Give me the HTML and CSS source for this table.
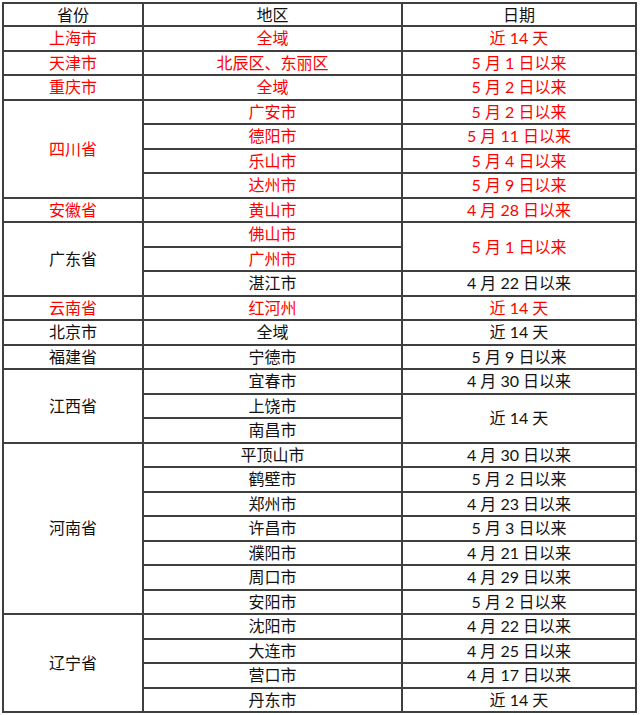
FILE: index.html
```html
<!DOCTYPE html>
<html lang="zh-CN">
<head>
<meta charset="utf-8">
<title>省份地区日期</title>
<link rel="stylesheet" href="styles.css">
</head>
<body>
<table class="sheet">
  <colgroup>
    <col class="c-prov">
    <col class="c-area">
    <col class="c-date">
  </colgroup>
  <thead>
    <tr class="head"><th>省份</th><th>地区</th><th>日期</th></tr>
  </thead>
  <tbody>
    <tr class="red"><td>上海市</td><td>全域</td><td>近 14 天</td></tr>
    <tr class="red"><td>天津市</td><td>北辰区、东丽区</td><td>5 月 1 日以来</td></tr>
    <tr class="red"><td>重庆市</td><td>全域</td><td>5 月 2 日以来</td></tr>
    <tr class="red"><td rowspan="4">四川省</td><td>广安市</td><td>5 月 2 日以来</td></tr>
    <tr class="red"><td>德阳市</td><td>5 月 11 日以来</td></tr>
    <tr class="red"><td>乐山市</td><td>5 月 4 日以来</td></tr>
    <tr class="red"><td>达州市</td><td>5 月 9 日以来</td></tr>
    <tr class="red"><td>安徽省</td><td>黄山市</td><td>4 月 28 日以来</td></tr>
    <tr><td rowspan="3">广东省</td><td class="hot">佛山市</td><td rowspan="2" class="hot">5 月 1 日以来</td></tr>
    <tr><td class="hot">广州市</td></tr>
    <tr><td>湛江市</td><td>4 月 22 日以来</td></tr>
    <tr class="red"><td>云南省</td><td>红河州</td><td>近 14 天</td></tr>
    <tr><td>北京市</td><td>全域</td><td>近 14 天</td></tr>
    <tr><td>福建省</td><td>宁德市</td><td>5 月 9 日以来</td></tr>
    <tr><td rowspan="3">江西省</td><td>宜春市</td><td>4 月 30 日以来</td></tr>
    <tr><td>上饶市</td><td rowspan="2">近 14 天</td></tr>
    <tr><td>南昌市</td></tr>
    <tr><td rowspan="7">河南省</td><td>平顶山市</td><td>4 月 30 日以来</td></tr>
    <tr><td>鹤壁市</td><td>5 月 2 日以来</td></tr>
    <tr><td>郑州市</td><td>4 月 23 日以来</td></tr>
    <tr><td>许昌市</td><td>5 月 3 日以来</td></tr>
    <tr><td>濮阳市</td><td>4 月 21 日以来</td></tr>
    <tr><td>周口市</td><td>4 月 29 日以来</td></tr>
    <tr><td>安阳市</td><td>5 月 2 日以来</td></tr>
    <tr><td rowspan="4">辽宁省</td><td>沈阳市</td><td>4 月 22 日以来</td></tr>
    <tr><td>大连市</td><td>4 月 25 日以来</td></tr>
    <tr><td>营口市</td><td>4 月 17 日以来</td></tr>
    <tr><td>丹东市</td><td>近 14 天</td></tr>
  </tbody>
</table>
</body>
</html>
```
FILE: styles.css
```css
html, body {
  margin: 0;
  padding: 0;
  background: #ffffff;
}

.sheet {
  margin: 2px 0 0 2px;
  width: 635px;
  border-collapse: collapse;
  table-layout: fixed;
  font-family: "Lato", "Noto Sans CJK SC", sans-serif;
  font-size: 16px;
  color: #111111;
}

.c-prov { width: 140px; }
.c-area { width: 259px; }
.c-date { width: 234px; }

.sheet th,
.sheet td {
  border: 2px solid #3f3f3f;
  padding: 0;
  text-align: center;
  vertical-align: middle;
  font-weight: normal;
  line-height: 1;
  white-space: nowrap;
}

.head {
  height: 23px;
}

.sheet tbody tr {
  height: 24.5px;
}

.red td,
.sheet td.hot {
  color: #ff0000;
}
```
